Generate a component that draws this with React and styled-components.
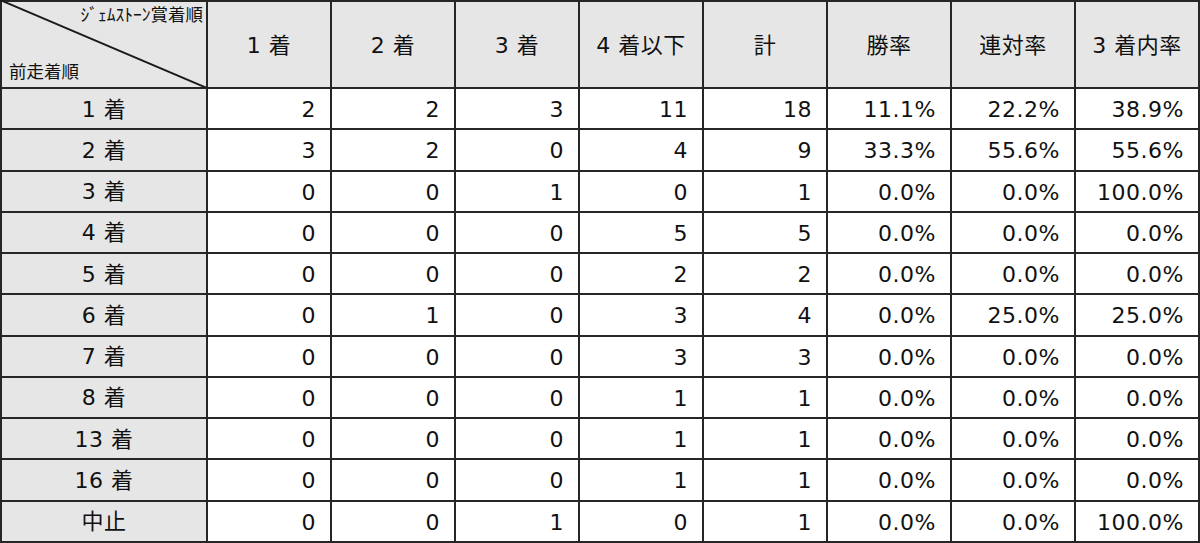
import styled, { createGlobalStyle } from 'styled-components';

const GlobalStyle = createGlobalStyle`
  html, body {
    margin: 0;
    padding: 0;
    background: #ffffff;
  }
  body {
    font-family: 'DejaVu Sans', 'Noto Sans CJK JP', sans-serif;
    color: #111;
  }
`;

const headers = ['1 着', '2 着', '3 着', '4 着以下', '計', '勝率', '連対率', '3 着内率'];

const rows = [
  ['1 着', 2, 2, 3, 11, 18, '11.1%', '22.2%', '38.9%'],
  ['2 着', 3, 2, 0, 4, 9, '33.3%', '55.6%', '55.6%'],
  ['3 着', 0, 0, 1, 0, 1, '0.0%', '0.0%', '100.0%'],
  ['4 着', 0, 0, 0, 5, 5, '0.0%', '0.0%', '0.0%'],
  ['5 着', 0, 0, 0, 2, 2, '0.0%', '0.0%', '0.0%'],
  ['6 着', 0, 1, 0, 3, 4, '0.0%', '25.0%', '25.0%'],
  ['7 着', 0, 0, 0, 3, 3, '0.0%', '0.0%', '0.0%'],
  ['8 着', 0, 0, 0, 1, 1, '0.0%', '0.0%', '0.0%'],
  ['13 着', 0, 0, 0, 1, 1, '0.0%', '0.0%', '0.0%'],
  ['16 着', 0, 0, 0, 1, 1, '0.0%', '0.0%', '0.0%'],
  ['中止', 0, 0, 1, 0, 1, '0.0%', '0.0%', '100.0%'],
];

const App = () => {
  return (
    <>
      <GlobalStyle />
      <Grid>
        <Corner>
          <Diagonal viewBox="0 0 100 100" preserveAspectRatio="none">
            <line x1="0" y1="0" x2="100" y2="100" stroke="#1a1a1a" strokeWidth="2" vectorEffect="non-scaling-stroke" />
          </Diagonal>
          <CornerTop>ｼﾞｪﾑｽﾄｰﾝ賞着順</CornerTop>
          <CornerBottom>前走着順</CornerBottom>
        </Corner>
        {headers.map((h) => (
          <HeadCell key={h}>{h}</HeadCell>
        ))}
        {rows.map((r) => (
          <Row key={r[0]} cells={r} />
        ))}
      </Grid>
    </>
  );
};

const Row = ({ cells }) => {
  const [label, ...values] = cells;
  return (
    <>
      <LabelCell>{label}</LabelCell>
      {values.map((v, i) => (
        <NumCell key={i}>{v}</NumCell>
      ))}
    </>
  );
};

export default App;

const Grid = styled.div`
  display: grid;
  grid-template-columns: 204px repeat(8, 122px);
  grid-template-rows: 85px repeat(11, 39.25px);
  gap: 2px;
  padding: 2px;
  width: max-content;
  background: #262626;
`;

const Cell = styled.div`
  display: flex;
  align-items: center;
  font-size: 22px;
  letter-spacing: 0.5px;
  line-height: 1;
  white-space: nowrap;
`;

const HeadCell = styled(Cell)`
  justify-content: center;
  background: #e6e6e6;
  padding-top: 2px;
`;

const LabelCell = styled(Cell)`
  justify-content: center;
  background: #e6e6e6;
  padding-top: 2px;
`;

const NumCell = styled(Cell)`
  justify-content: flex-end;
  background: #ffffff;
  padding: 3px 14px 0 0;
`;

const Corner = styled.div`
  position: relative;
  background: #e6e6e6;
  display: flex;
  flex-direction: column;
  justify-content: space-between;
  padding: 3px 3px 8px 7px;
  font-family: 'Noto Sans CJK JP', sans-serif;
  font-size: 17.5px;
  line-height: 1;
`;

const Diagonal = styled.svg`
  position: absolute;
  left: -2px;
  top: -2px;
  width: calc(100% + 3px);
  height: calc(100% + 3px);
`;

const CornerTop = styled.div`
  align-self: flex-end;
`;

const CornerBottom = styled.div`
  align-self: flex-start;
`;
